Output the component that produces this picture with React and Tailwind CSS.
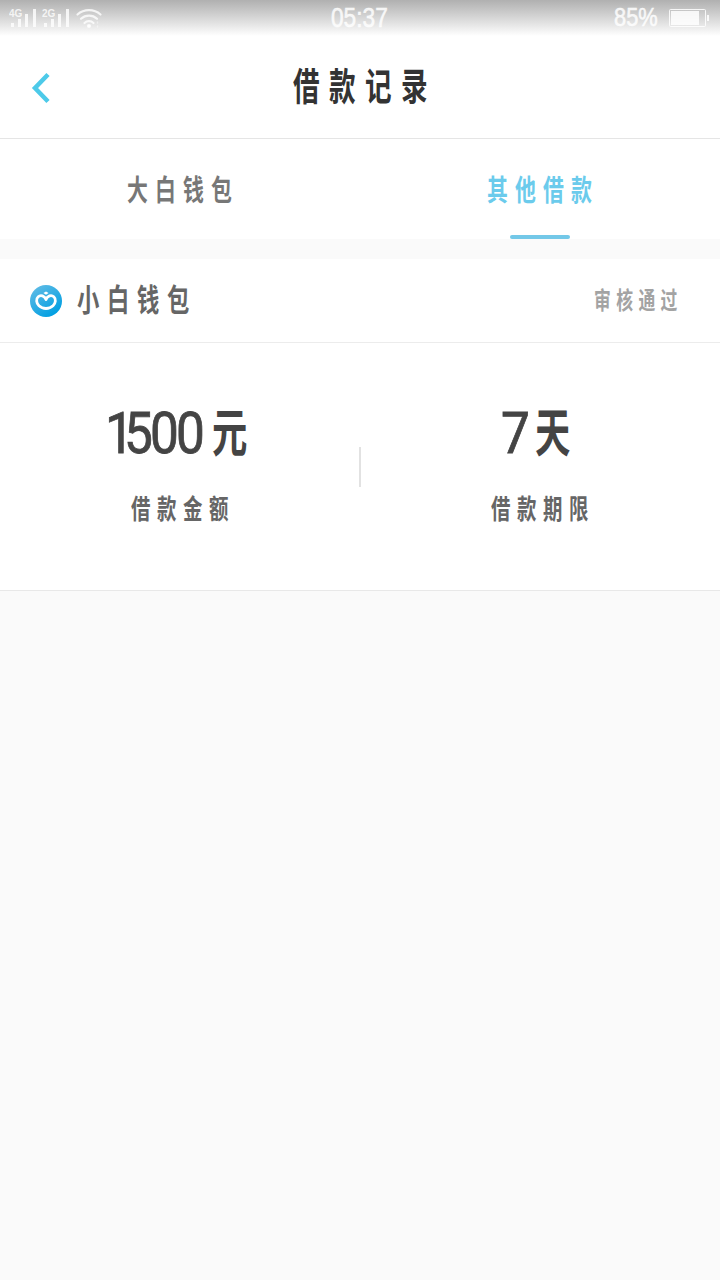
import React from 'react';

// Condensed text: the outer box keeps the real width, the inner span is squeezed into it
const Squeezed = ({ box, text, children }) => (
    <span className={`block shrink-0 whitespace-nowrap ${box}`}>
        <span className={`inline-block origin-left ${text}`}>{children}</span>
    </span>
);

const SignalIcon = ({ label }) => (
    <svg width="28" height="20" viewBox="0 0 28 20" fill="white" fillOpacity="0.8">
        <text x="0" y="7.5" fontSize="10" fontWeight="bold" fontFamily="Liberation Sans, sans-serif">{label}</text>
        <rect x="2" y="14" width="3" height="4" />
        <rect x="9" y="10" width="3" height="8" />
        <rect x="16" y="5" width="3" height="13" />
        <rect x="24" y="0" width="3" height="18" />
    </svg>
);

const WifiIcon = () => (
    <svg width="26" height="20" viewBox="0 0 26 20" fill="none" stroke="white" strokeOpacity="0.8" strokeWidth="2.2" strokeLinecap="round">
        <path d="M1.5 5.5C8-.3 18-.3 24.5 5.5" />
        <path d="M5 9.8C9.5 5.6 16.5 5.6 21 9.8" />
        <path d="M8.5 14C11 11.6 15 11.6 17.5 14" />
        <circle cx="13" cy="17" r="1" fill="white" />
        <path d="M21.5 13v1M21.5 17v1" strokeWidth="1.5" strokeOpacity="0.45" />
    </svg>
);

const BatteryIcon = () => (
    <svg width="40" height="20" viewBox="0 0 40 20" fill="none">
        <rect x="0.5" y="0.5" width="36" height="17" rx="1" stroke="white" strokeOpacity="0.85" />
        <rect x="2" y="2" width="28" height="14" fill="white" fillOpacity="0.85" />
        <rect x="38" y="6" width="2" height="6" fill="white" fillOpacity="0.85" />
    </svg>
);

const WalletLogo = () => (
    <svg width="32" height="32" viewBox="0 0 32 32" fill="none" className="shrink-0">
        <defs>
            <linearGradient id="logo" x1="6" y1="3" x2="24" y2="30" gradientUnits="userSpaceOnUse">
                <stop stopColor="#58b9e5" />
                <stop offset="1" stopColor="#009fe2" />
            </linearGradient>
        </defs>
        <circle cx="16" cy="16" r="16" fill="url(#logo)" />
        <path
            d="M16 14.6C14.6 10.8 10.6 9.6 8.2 11.8C5.8 14 6.2 18 9 20.8C12.8 24.4 19.2 24.4 23 20.8C25.8 18 26.2 14 23.8 11.8C21.4 9.6 17.4 10.8 16 14.6Z"
            stroke="white"
            strokeWidth="2.8"
            strokeLinejoin="round"
        />
        <path d="M16 6.4l2.6 1.7L16 9.8l-2.6-1.7z" fill="white" />
    </svg>
);

const StatusBar = () => (
    <div className="flex h-9 justify-between bg-linear-to-b from-[#b0b0b0] to-white pl-[9px] pr-[11px] pt-[9px]">
        <div className="flex w-[200px]">
            <SignalIcon label="4G" />
            <div className="ml-[5px]"><SignalIcon label="2G" /></div>
            <div className="ml-[6px]"><WifiIcon /></div>
        </div>
        <Squeezed box="w-[57px]" text="scale-x-[0.84] text-[27px] leading-[18px] text-white/80 [-webkit-text-stroke:0.5px]">05:37</Squeezed>
        <div className="flex w-[200px] justify-end">
            <Squeezed box="w-[45px]" text="scale-x-[0.84] text-[26px] leading-[17px] text-white/80 [-webkit-text-stroke:0.5px]">85%</Squeezed>
            <div className="ml-[10px]"><BatteryIcon /></div>
        </div>
    </div>
);

const Header = () => (
    <div className="flex h-[103px] items-center border-b border-[#e5e5e5] bg-white">
        <div className="w-[293px] pl-[31px] pt-0.5">
            <svg width="20" height="32" viewBox="0 0 20 32" fill="none" stroke="#4dcae9" strokeWidth="4.5">
                <path d="M17 2.5L4 16l13 13.5" />
            </svg>
        </div>
        <Squeezed box="w-[136px] pt-2 leading-[52px]" text="scale-x-70 text-[38px] font-bold tracking-[13.4px] text-[#333]">借款记录</Squeezed>
    </div>
);

const Tab = ({ active, children }) => (
    <div className="flex flex-1 flex-col items-center">
        <div className="flex h-24 items-center pt-[7px]">
            <Squeezed
                box="w-[106px]"
                text={`scale-x-72 text-[29px] leading-[40px] font-bold tracking-[9.9px] ${active ? 'text-[#6bcbec]' : 'text-[#777]'}`}
            >
                {children}
            </Squeezed>
        </div>
        {active && <div className="h-1 w-[60px] rounded-full bg-[#73c8e8]" />}
    </div>
);

const Stat = ({ value, valueBox, valueText, unit, label }) => (
    <div className="flex flex-1 flex-col items-center">
        <div className="flex h-[60px] items-center pr-2">
            <Squeezed
                box={valueBox}
                text={`scale-x-90 font-[Roboto,sans-serif] text-[57px] leading-[58px] tracking-[-3.1px] [-webkit-text-stroke:0.8px] ${valueText}`}
            >
                {value}
            </Squeezed>
            <Squeezed box="w-9" text="scale-x-68 text-[52px] leading-[56px] font-bold">{unit}</Squeezed>
        </div>
        <Squeezed box="mt-[26px] w-[98px]" text="scale-x-72 text-[27px] leading-[40px] font-bold tracking-[9.1px] text-[#666]">{label}</Squeezed>
    </div>
);

const LoanCard = () => (
    <div className="border-b border-[#e8e8e8] bg-white">
        <div className="flex h-[84px] items-center border-b border-[#ececec] pl-[30px] pr-10">
            <WalletLogo />
            <Squeezed box="ml-[15px] w-[116px]" text="scale-x-72 text-[31px] leading-[44px] font-bold tracking-[10.7px] text-[#666]">小白钱包</Squeezed>
            <div className="ml-auto">
                <Squeezed box="w-[86px]" text="scale-x-70 text-[24px] leading-[34px] font-bold tracking-[7.7px] text-[#a3a3a3]">审核通过</Squeezed>
            </div>
        </div>
        <div className="flex h-[247px] items-center text-[#444]">
            {/* the leading "1" is kerned tighter than the rest */}
            <Stat value="1500" valueBox="w-[107px]" valueText="first-letter:tracking-[-10.9px]" unit="元" label="借款金额" />
            <div className="-mx-px h-10 w-0.5 bg-[#e2e2e2]" />
            <Stat value="7" valueBox="w-[34px]" valueText="" unit="天" label="借款期限" />
        </div>
    </div>
);

export default function App() {
    return (
        <div className="h-[1280px] w-[720px] overflow-hidden bg-[#fafafa] font-['Liberation_Sans','Noto_Sans_CJK_SC',sans-serif]">
            <StatusBar />
            <Header />
            <div className="mb-5 flex h-[100px] bg-white">
                <Tab>大白钱包</Tab>
                <Tab active>其他借款</Tab>
            </div>
            <LoanCard />
        </div>
    );
}
